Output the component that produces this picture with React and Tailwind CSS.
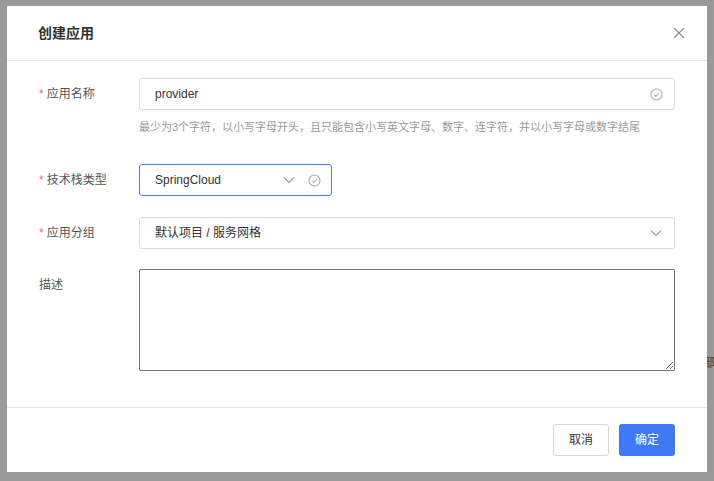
import React from 'react';

const font = { fontFamily: '"Liberation Sans", Arial, "Noto Sans CJK SC", sans-serif' };

function CheckCircle() {
  return (
    <svg width="13" height="13" viewBox="0 0 14 14" fill="none" stroke="#a8a8a8" strokeWidth="1.1">
      <circle cx="7" cy="7" r="6" />
      <path d="M4.3 7.2l1.9 1.9 3.6-3.7" />
    </svg>
  );
}

function Chevron() {
  return (
    <svg width="12" height="8" viewBox="0 0 12 8" fill="none" stroke="#9a9a9a" strokeWidth="1.1">
      <path d="M1 1.5l5 5 5-5" />
    </svg>
  );
}

function Label({ children, required }) {
  return (
    <div className="w-[100px] shrink-0 h-8 flex items-center text-[12px] text-[#555]">
      {required && <span className="text-[#f56c6c] mr-[3px]">*</span>}
      {children}
    </div>
  );
}

export default function App() {
  return (
    <div className="relative w-[714px] h-[481px] bg-[#999999] overflow-hidden" style={font}>
      {/* dimmed page content peeking out behind the overlay */}
      <span className="absolute left-[703px] top-[354px] text-[12px] text-[#333] whitespace-nowrap">部署</span>

      <div className="absolute left-[7px] top-[6px] w-[700px] h-[466px] bg-white flex flex-col">
        <div className="h-[55px] flex items-center justify-between pl-[31px] pr-[22px] border-b border-[#e4e4e8]">
          <span className="text-[14px] font-semibold text-[#333]">创建应用</span>
          <svg width="12" height="12" viewBox="0 0 12 12" stroke="#8c8c8c" strokeWidth="1.1">
            <path d="M1 1l10 10M11 1L1 11" />
          </svg>
        </div>

        <div className="flex-1 px-[32px] pt-[17px]">
          <div className="flex">
            <Label required>应用名称</Label>
            <div className="flex-1">
              <div className="h-8 border border-[#dcdcdc] rounded-[3px] flex items-center justify-between pl-[15px] pr-[11px] text-[12px] text-[#333]">
                <span>provider</span>
                <CheckCircle />
              </div>
              <div className="mt-[10px] text-[11px] text-[#999] leading-[14px] whitespace-nowrap">
                最少为3个字符，以小写字母开头，且只能包含小写英文字母、数字、连字符，并以小写字母或数字结尾
              </div>
            </div>
          </div>

          <div className="flex mt-[30px]">
            <Label required>技术栈类型</Label>
            <div className="w-[193px] h-8 border border-[#4a7cf3] rounded-[3px] flex items-center pl-[15px] pr-[10px] text-[12px] text-[#333]">
              <span className="flex-1">SpringCloud</span>
              <Chevron />
              <span className="ml-[13px] flex"><CheckCircle /></span>
            </div>
          </div>

          <div className="flex mt-[21px]">
            <Label required>应用分组</Label>
            <div className="flex-1 h-8 border border-[#dcdcdc] rounded-[3px] flex items-center justify-between pl-[15px] pr-[12px] text-[12px] text-[#333]">
              <span>默认项目 / 服务网格</span>
              <Chevron />
            </div>
          </div>

          <div className="flex mt-[20px]">
            <Label>描述</Label>
            <textarea className="flex-1 h-[102px] border border-[#767676] rounded-[2px] resize" />
          </div>
        </div>

        <div className="h-[65px] border-t border-[#e4e4e8] flex items-center justify-end gap-[10px] px-[32px] pb-px">
          <button className="w-[56px] h-8 border border-[#d6d6d6] rounded-[3px] bg-white text-[12px] text-[#333]">取消</button>
          <button className="w-[56px] h-8 rounded-[3px] bg-[#3f78f4] text-[12px] text-white">确定</button>
        </div>
      </div>
    </div>
  );
}
